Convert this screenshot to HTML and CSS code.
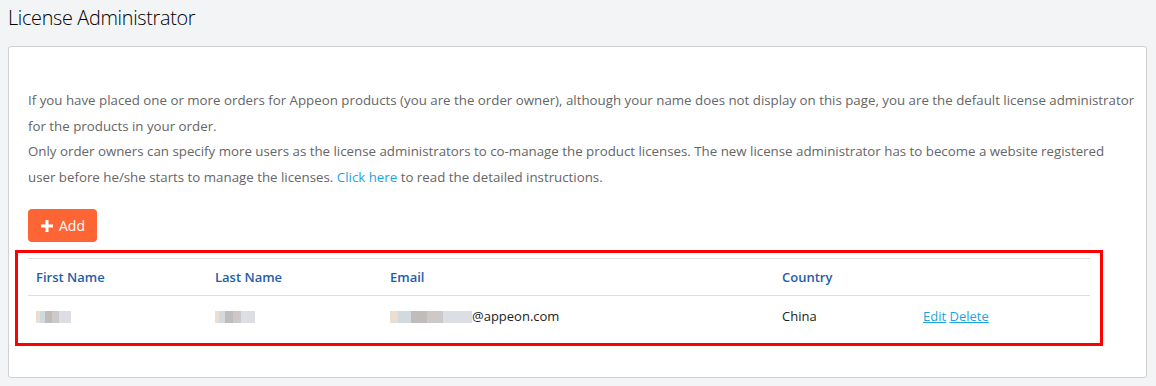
FILE: index.html
```html
<!DOCTYPE html>
<html lang="en">
<head>
    <meta charset="UTF-8">
    <title>License Administrator</title>
    <link rel="stylesheet" href="styles.css">
</head>
<body>
    <h1 class="page-title">License Administrator</h1>

    <div class="card">
        <p class="intro">
            If you have placed one or more orders for Appeon products (you are the order owner), although your name does not display on this page, you are the default license administrator<br>
            for the products in your order.<br>
            Only order owners can specify more users as the license administrators to co-manage the product licenses. The new license administrator has to become a website registered<br>
            user before he/she starts to manage the licenses. <a href="#" class="link">Click here</a> to read the detailed instructions.
        </p>

        <button class="btn-add">
            <svg class="plus" width="12" height="12" viewBox="0 0 12 12"><path d="M6 0v12M0 6h12" stroke="#fff" stroke-width="3"/></svg>
            <span>Add</span>
        </button>

        <!-- highlighted table -->
        <div class="highlight">
            <table class="admin-table">
                <thead>
                    <tr>
                        <th class="col-first">First Name</th>
                        <th class="col-last">Last Name</th>
                        <th class="col-email">Email</th>
                        <th class="col-country">Country</th>
                        <th></th>
                    </tr>
                </thead>
                <tbody>
                    <tr>
                        <td><span class="blur w1"></span></td>
                        <td><span class="blur w2"></span></td>
                        <td><span class="blur w3"></span>@appeon.com</td>
                        <td>China</td>
                        <td><a href="#" class="row-link">Edit</a> <a href="#" class="row-link">Delete</a></td>
                    </tr>
                </tbody>
            </table>
        </div>
    </div>
</body>
</html>
```

FILE: styles.css
```css
body {
    font-family: 'Open Sans', 'Noto Sans', sans-serif;
    background-color: #f3f4f6;
    color: #333;
    margin: 0;
    padding: 0 9px 0 8px;
}

.page-title {
    font-size: 19.8px;
    font-weight: 300;
    color: #000;
    margin: 0;
    padding: 4px 0 0 0;
    height: 42px;
    line-height: 28px;
    letter-spacing: -0.3px;
}

.card {
    background-color: #fff;
    border: 1px solid #d0d0d0;
    border-radius: 3px;
    padding: 41px 10px 31px 19px;
}

.intro {
    font-size: 13.3px;
    line-height: 25.5px;
    color: #666;
    margin: 0 0 19px 0;
}

.link {
    color: #1ba5e0;
    text-decoration: none;
}

.btn-add {
    font-family: inherit;
    background-color: #fd6535;
    color: #fff;
    border: none;
    border-radius: 4px;
    height: 33px;
    width: 69px;
    font-size: 14px;
    padding: 0 0 0 1px;
    cursor: pointer;
    display: flex;
    align-items: center;
    justify-content: center;
    gap: 6px;
}

.plus {
    display: block;
}

.highlight {
    border: 3px solid #ff0000;
    margin: 8px 33px 0 -13px;
    padding: 5px 10px 7px 10px;
}

.admin-table {
    width: 100%;
    border-collapse: collapse;
    font-size: 13px;
}

.admin-table th {
    text-align: left;
    color: #1f5ea8;
    font-weight: 600;
    height: 36px;
    padding: 0 8px;
    border-top: 1px solid #ddd;
    border-bottom: 1px solid #ddd;
}

.admin-table td {
    color: #222;
    height: 39px;
    padding: 0 8px 1px 8px;
}

.col-first { width: 163px; }
.col-last { width: 159px; }
.col-email { width: 376px; }
.col-country { width: 125px; }

.row-link {
    color: #1ba5e0;
    text-decoration: underline;
}

.blur {
    display: inline-block;
    height: 12px;
    vertical-align: -2px;
    background: linear-gradient(90deg, #e8d8c8 0 10%, #c9d3da 10% 25%, #b4b0b0 25% 45%, #c4bfbf 45% 65%, #d5d8de 65% 100%);
    opacity: 0.85;
}

.w1 { width: 35px; }
.w2 { width: 40px; }
.w3 { width: 82px; }
```
